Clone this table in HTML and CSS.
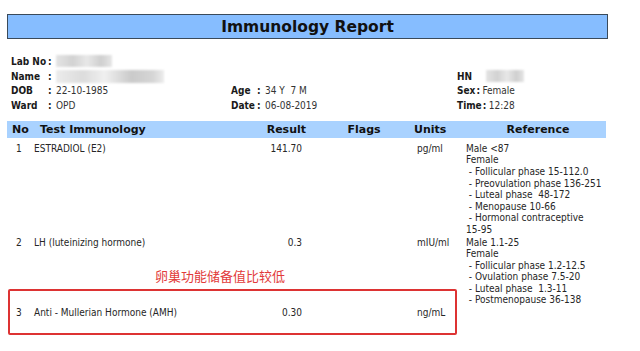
FILE: index.html
```html
<!DOCTYPE html>
<html>
<head>
<meta charset="utf-8">
<link rel="stylesheet" href="styles.css">
</head>
<body>
<div class="page">
  <div class="title">Immunology Report</div>

  <div class="info">
    <div class="field f-left"><span class="lbl">Lab No</span><span class="colon">:</span><span class="blur blur-lab"></span></div>
    <div class="field f-mid"></div>
    <div class="field f-right"></div>

    <div class="field f-left"><span class="lbl">Name</span><span class="colon">:</span><span class="blur blur-name"></span></div>
    <div class="field f-mid"></div>
    <div class="field f-right"><span class="lbl">HN</span><span class="colon"></span><span class="blur blur-hn"></span></div>

    <div class="field f-left"><span class="lbl">DOB</span><span class="colon">:</span><span class="val">22-10-1985</span></div>
    <div class="field f-mid"><span class="lbl">Age</span><span class="colon">:</span><span class="val">34 Y&nbsp; 7 M</span></div>
    <div class="field f-right"><span class="lbl">Sex</span><span class="colon">:</span><span class="val">Female</span></div>

    <div class="field f-left"><span class="lbl">Ward</span><span class="colon">:</span><span class="val">OPD</span></div>
    <div class="field f-mid"><span class="lbl">Date</span><span class="colon">:</span><span class="val">06-08-2019</span></div>
    <div class="field f-right"><span class="lbl">Time</span><span class="colon">:</span><span class="val">12:28</span></div>
  </div>

  <div class="thead row">
    <div class="c-no">No</div>
    <div class="c-test">Test Immunology</div>
    <div class="c-res">Result</div>
    <div class="c-flag">Flags</div>
    <div class="c-unit">Units</div>
    <div class="c-ref">Reference</div>
  </div>

  <div class="trow row">
    <div class="c-no">1</div>
    <div class="c-test">ESTRADIOL (E2)</div>
    <div class="c-res">141.70</div>
    <div class="c-flag"></div>
    <div class="c-unit">pg/ml</div>
    <div class="c-ref">Male &lt;87<br>Female<br>&nbsp;- Follicular phase 15-112.0<br>&nbsp;- Preovulation phase 136-251<br>&nbsp;- Luteal phase&nbsp; 48-172<br>&nbsp;- Menopause 10-66<br>&nbsp;- Hormonal contraceptive<br>15-95</div>
  </div>

  <div class="trow row">
    <div class="c-no">2</div>
    <div class="c-test">LH (luteinizing hormone)</div>
    <div class="c-res">0.3</div>
    <div class="c-flag"></div>
    <div class="c-unit">mIU/ml</div>
    <div class="c-ref">Male 1.1-25<br>Female<br>&nbsp;- Follicular phase 1.2-12.5<br>&nbsp;- Ovulation phase 7.5-20<br>&nbsp;- Luteal phase&nbsp; 1.3-11<br>&nbsp;- Postmenopause 36-138</div>
  </div>

  <div class="trow row row3">
    <div class="c-no">3</div>
    <div class="c-test">Anti - Mullerian Hormone (AMH)</div>
    <div class="c-res">0.30</div>
    <div class="c-flag"></div>
    <div class="c-unit">ng/mL</div>
    <div class="c-ref"></div>
  </div>

  <div class="note">卵巢功能储备值比较低</div>
  <div class="hl-box"></div>
</div>
</body>
</html>
```

FILE: styles.css
```css
html, body {
  margin: 0;
  padding: 0;
  background: #ffffff;
}
body {
  font-family: "DejaVu Sans Condensed", "DejaVu Sans", sans-serif;
  font-size: 10px;
  color: #262626;
}
.page {
  position: relative;
  width: 640px;
  height: 351px;
  padding: 14px 0 0 7px;
  box-sizing: border-box;
  overflow: hidden;
}
.title {
  width: 599px;
  height: 23px;
  border: 1px solid #3a4a5a;
  background: #86bdff;
  text-align: center;
  font-family: "DejaVu Sans", sans-serif;
  font-weight: bold;
  font-size: 15.5px;
  line-height: 24px;
  color: #111;
}
.info {
  display: grid;
  grid-template-columns: 220px 226px 1fr;
  grid-auto-rows: 14.7px;
  margin-top: 15px;
  padding-left: 4px;
  align-items: center;
}
.field {
  display: flex;
  align-items: center;
  white-space: nowrap;
  height: 14.7px;
}
.lbl {
  font-weight: bold;
  color: #1a1a1a;
}
.f-left .lbl { min-width: 36px; margin-right: 1px; }
.f-mid .lbl { min-width: 25px; margin-right: 1px; }
.f-right .lbl { min-width: 16px; margin-right: 1px; }
.colon {
  font-weight: bold;
  width: 8px;
}
.f-right .colon { width: 6px; }
.val { color: #333; }
.blur {
  display: inline-block;
  height: 12px;
  background: linear-gradient(90deg, #e4e4e4, #d2d2d2 30%, #e8e8e8 55%, #cfcfcf 80%, #e6e6e6);
  filter: blur(1px);
}
.blur-lab { width: 56px; }
.blur-name { width: 108px; height: 13px; background: linear-gradient(90deg, #ececec, #dcdcdc 25%, #f0f0f0 45%, #cacaca 70%, #d6d6d6 90%, #ededed); }
.blur-hn { width: 38px; margin-left: 6px; }

.row {
  display: grid;
  grid-template-columns: 27px 206px 66px 104px 56px 1fr;
  width: 599px;
}
.thead {
  margin-top: 8px;
  height: 17px;
  background: #a9d2ff;
  font-family: "DejaVu Sans", sans-serif;
  font-weight: bold;
  font-size: 11px;
  line-height: 17px;
  color: #111;
}
.thead .c-no { padding-left: 5px; }
.thead .c-test { padding-left: 6px; }
.thead .c-res { text-align: right; padding-right: 0; }
.thead .c-flag { text-align: center; padding-left: 12px; }
.thead .c-unit { padding-left: 4px; }
.thead .c-ref { text-align: center; padding-left: 4px; }

.trow {
  margin-top: 5px;
  line-height: 11.6px;
}
.trow + .trow { margin-top: 1px; }
.trow .c-no { padding-left: 9px; }
.trow .c-res { text-align: right; padding-right: 4px; }
.trow .c-unit { padding-left: 7px; }
.trow .c-ref { padding-left: 0; }
.row3.trow { margin-top: 1px; }

.note {
  position: absolute;
  left: 155px;
  top: 267px;
  font-family: "Noto Sans CJK SC", sans-serif;
  font-size: 13px;
  line-height: 18px;
  color: #e23b3b;
}
.hl-box {
  position: absolute;
  left: 8px;
  top: 289px;
  width: 445px;
  height: 42px;
  border: 2px solid #dd3333;
  border-radius: 2px;
}
```
